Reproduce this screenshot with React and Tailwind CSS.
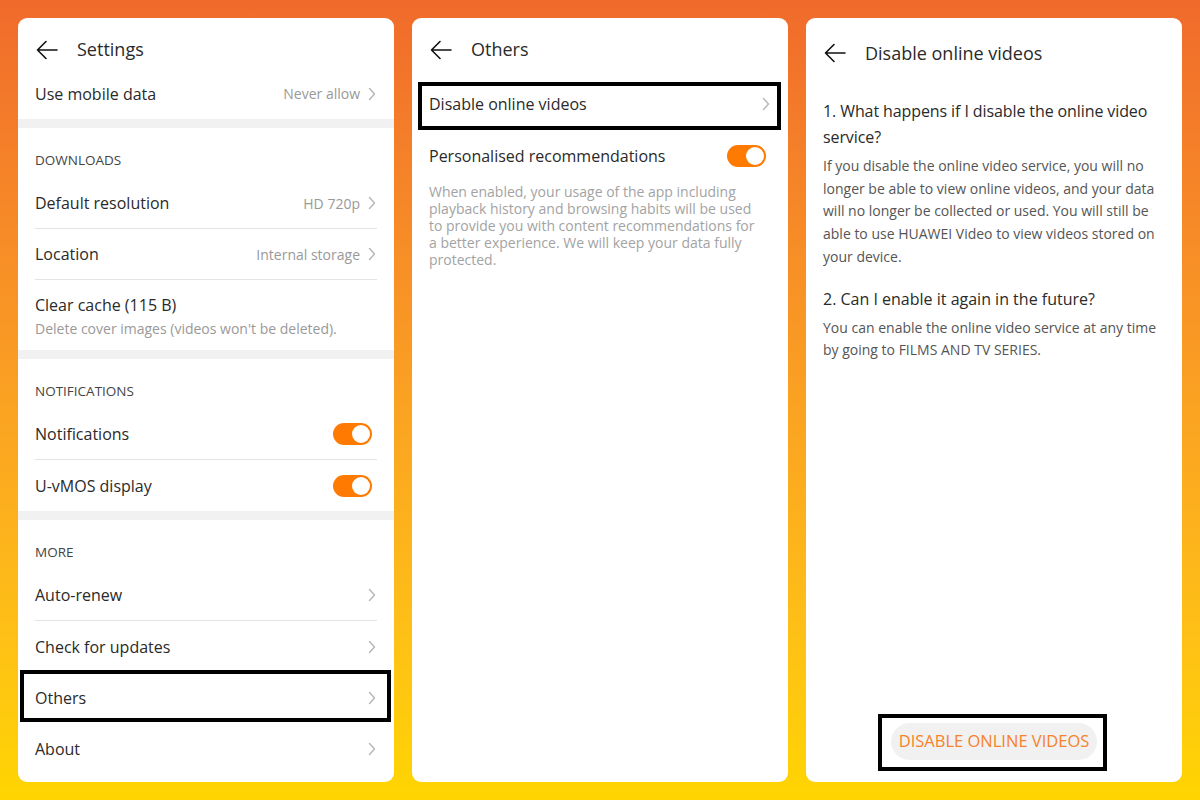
const FONT = { fontFamily: '"Open Sans", "Noto Sans", sans-serif' };

function BackArrow() {
  return (
    <svg width="22" height="20" viewBox="0 0 22 20" fill="none" stroke="#111" strokeWidth="1.6" strokeLinecap="round" strokeLinejoin="round">
      <path d="M1.5 10h19.5M10 1.5 1.5 10l8.5 8.5" />
    </svg>
  );
}

function Chevron() {
  return (
    <svg width="8" height="14" viewBox="0 0 8 14" fill="none" stroke="#b5b5b5" strokeWidth="1.4" strokeLinecap="round" strokeLinejoin="round">
      <path d="M1.5 1.5 6.5 7l-5 5.5" />
    </svg>
  );
}

function Toggle() {
  return (
    <div className="mr-[5px] flex h-[22px] w-[39px] items-center justify-end rounded-full bg-[#ff7a00] p-[2px]">
      <div className="h-[18px] w-[18px] rounded-full bg-white" />
    </div>
  );
}

function Header({ title, tall }) {
  return (
    <div className={`flex items-center gap-[19px] pl-[18px] ${tall ? "h-[70px]" : "h-[50px] pt-[13px]"}`}>
      <BackArrow />
      <span className="text-[18px] text-[#2a2a2a]">{title}</span>
    </div>
  );
}

function Row({ label, value, toggle, divider }) {
  return (
    <div className="px-[17px]">
      <div className={`flex h-[51px] items-center justify-between ${divider ? "border-b border-[#e3e3e3]" : ""}`}>
        <span className="text-[16px] text-[#2a2a2a]">{label}</span>
        {toggle ? (
          <Toggle />
        ) : (
          <div className="flex items-center gap-[8px] pr-[1px]">
            {value && <span className="text-[14px] text-[#999]">{value}</span>}
            <Chevron />
          </div>
        )}
      </div>
    </div>
  );
}

function Section({ title }) {
  return (
    <div className="flex h-[50px] items-center px-[17px] pt-[14px] text-[13.5px] text-[#444]">{title}</div>
  );
}

function Band() {
  return <div className="h-[9px] bg-[#f1f1f1]" />;
}

function SettingsPanel() {
  return (
    <div className="flex flex-1 flex-col overflow-hidden rounded-[9px] bg-white">
      <Header title="Settings" />
      <Row label="Use mobile data" value="Never allow" />
      <Band />
      <Section title="DOWNLOADS" />
      <Row label="Default resolution" value="HD 720p" divider />
      <Row label="Location" value="Internal storage" divider />
      <div className="flex h-[70px] flex-col px-[17px] pt-[14px]">
        <span className="text-[16px] leading-[22px] text-[#2a2a2a]">Clear cache (115 B)</span>
        <span className="mt-[4px] text-[14px] leading-[18px] text-[#999]">Delete cover images (videos won't be deleted).</span>
      </div>
      <Band />
      <Section title="NOTIFICATIONS" />
      <Row label="Notifications" toggle divider />
      <Row label="U-vMOS display" toggle />
      <Band />
      <Section title="MORE" />
      <Row label="Auto-renew" divider />
      <Row label="Check for updates" />
      <div className="relative">
        <Row label="Others" />
        <div className="absolute -top-[2px] bottom-[1px] left-[2px] right-[3px] border-4 border-black" />
      </div>
      <Row label="About" />
    </div>
  );
}

function OthersPanel() {
  return (
    <div className="flex flex-1 flex-col overflow-hidden rounded-[9px] bg-white">
      <Header title="Others" />
      <div className="relative mt-[10px]">
        <Row label="Disable online videos" />
        <div className="absolute top-[4px] -bottom-[1px] left-[6px] right-[7px] border-4 border-black" />
      </div>
      <div className="flex h-[54px] items-center justify-between px-[17px]">
        <span className="text-[16px] text-[#2a2a2a]">Personalised recommendations</span>
        <Toggle />
      </div>
      <p className="pl-[17px] pr-[30px] text-[14px] leading-[17px] text-[#a3a3a3]">
        When enabled, your usage of the app including playback history and browsing habits will be used to provide you with content recommendations for a better experience. We will keep your data fully protected.
      </p>
    </div>
  );
}

function DisablePanel() {
  return (
    <div className="flex flex-1 flex-col overflow-hidden rounded-[9px] bg-white">
      <Header title="Disable online videos" tall />
      <div className="flex-1 px-[17px] pr-[14px] pt-[10px]">
        <h2 className="text-[16px] leading-[26px] tracking-[-0.1px] text-[#2a2a2a]">1. What happens if I disable the online video service?</h2>
        <p className="mt-[5px] pr-[6px] text-[14px] leading-[22.7px] text-[#555]">
          If you disable the online video service, you will no longer be able to view online videos, and your data will no longer be collected or used. You will still be able to use HUAWEI Video to view videos stored on your device.
        </p>
        <h2 className="mt-[17px] text-[16px] leading-[26px] text-[#2a2a2a]">2. Can I enable it again in the future?</h2>
        <p className="mt-[5px] pr-[6px] text-[14px] leading-[22.7px] text-[#555]">
          You can enable the online video service at any time by going to FILMS AND TV SERIES.
        </p>
      </div>
      <div className="mb-[22px] flex justify-center">
        <div className="relative">
          <div className="flex h-[37px] w-[206px] items-center justify-center rounded-full bg-[#f1f1f1] text-[16.5px] text-[#f7822a]">
            DISABLE ONLINE VIDEOS
          </div>
          <div className="absolute -top-[9px] -bottom-[11px] -left-[13px] -right-[10px] border-4 border-black" />
        </div>
      </div>
    </div>
  );
}

export default function App() {
  return (
    <div
      className="flex h-[800px] w-[1200px] gap-[18px] bg-gradient-to-b from-[#f06a2b] to-[#ffd500] p-[18px]"
      style={FONT}
    >
      <SettingsPanel />
      <OthersPanel />
      <DisablePanel />
    </div>
  );
}
